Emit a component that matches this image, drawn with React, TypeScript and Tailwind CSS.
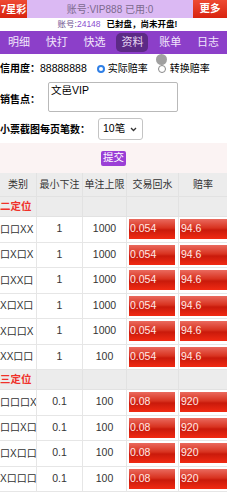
import React from "react";

const font = { fontFamily: '"Liberation Sans", "Noto Sans CJK SC", sans-serif' };

const navItems = ["明细", "快打", "快选", "资料", "账单", "日志"];

type Row = { name: string; min: string; max: string; water: string; rate: string };

const erding: Row[] = [
  { name: "口口XX", min: "1", max: "1000", water: "0.054", rate: "94.6" },
  { name: "口X口X", min: "1", max: "1000", water: "0.054", rate: "94.6" },
  { name: "口XX口", min: "1", max: "1000", water: "0.054", rate: "94.6" },
  { name: "X口X口", min: "1", max: "1000", water: "0.054", rate: "94.6" },
  { name: "X口口X", min: "1", max: "1000", water: "0.054", rate: "94.6" },
  { name: "XX口口", min: "1", max: "100", water: "0.054", rate: "94.6" },
];

const sanding: Row[] = [
  { name: "口口口X", min: "0.1", max: "100", water: "0.08", rate: "920" },
  { name: "口口X口", min: "0.1", max: "100", water: "0.08", rate: "920" },
  { name: "口X口口", min: "0.1", max: "100", water: "0.08", rate: "920" },
  { name: "X口口口", min: "0.1", max: "100", water: "0.08", rate: "920" },
];

const cols = "grid grid-cols-[37px_46px_44px_52px_48px]";
const redCell =
  "h-[20px] flex items-center pl-[1px] text-[10.5px] text-[#ffe9e6] bg-[linear-gradient(to_bottom,#ea6a5e_0%,#d8321f_45%,#c91a0b_55%,#f12a13_100%)]";

function DataRow({ r }: { r: Row }) {
  return (
    <div className={`${cols} h-[25.5px] border-b border-[#e6e6e6] text-[10.5px] text-[#333]`}>
      <div className="flex items-center border-r border-[#e6e6e6] overflow-hidden whitespace-nowrap text-[10px]">
        {r.name}
      </div>
      <div className="flex items-center justify-center border-r border-[#e6e6e6]">{r.min}</div>
      <div className="flex items-center justify-center border-r border-[#e6e6e6]">{r.max}</div>
      <div className="flex items-start pt-[2px] pl-[2px] pr-[3px] border-r border-[#e6e6e6]">
        <div className={`${redCell} w-full`}>{r.water}</div>
      </div>
      <div className="flex items-start pt-[2px] pl-[1px]">
        <div className={`${redCell} w-full`}>{r.rate}</div>
      </div>
    </div>
  );
}

function GroupRow({ title }: { title: string }) {
  return (
    <div className={`${cols} h-[20px] bg-[#ececec] border-b border-[#e2e2e2]`}>
      <div className="flex items-center text-[10.5px] font-bold text-[#f0312a] whitespace-nowrap border-r border-[#e2e2e2]">
        {title}
      </div>
      <div className="border-r border-[#e2e2e2]" />
      <div className="border-r border-[#e2e2e2]" />
      <div className="border-r border-[#e2e2e2]" />
      <div />
    </div>
  );
}

export default function App() {
  return (
    <div className="w-[227px] h-[494px] overflow-hidden bg-white relative" style={font}>
      {/* top bar */}
      <div className="flex h-[18px]">
        <div className="w-[27px] flex items-center justify-center bg-[linear-gradient(to_bottom,#ee4a32,#d8230f)] text-white text-[10px] font-bold whitespace-nowrap">
          7星彩
        </div>
        <div className="flex-1 flex items-center justify-center bg-[#dbb9f3] text-[#7b6a8e] text-[10px] whitespace-nowrap">
          账号:VIP888 已用:0
        </div>
        <div className="w-[34px] flex items-center justify-center bg-[linear-gradient(to_bottom,#ee4a32,#d8230f)] text-white text-[10.5px] font-bold">
          更多
        </div>
      </div>

      {/* notice */}
      <div className="h-[13px] flex items-center justify-center text-[8.5px] whitespace-nowrap pl-[8px]">
        <span className="text-[#6b4f8c]">账号:</span>
        <span className="text-[#8b4fd0]">24148</span>
        <span className="ml-[6px] text-black font-bold">已封盘，尚未开盘!</span>
      </div>

      {/* nav */}
      <div className="flex h-[23px] bg-[#8c3fc9]">
        {navItems.map((n) => (
          <div key={n} className="flex-1 flex items-center justify-center">
            <span
              className={
                n === "资料"
                  ? "px-[5px] py-[1px] rounded-[5px] bg-[#5c2a86] text-[#e6d6f2] text-[11px]"
                  : "text-[#f1e6fb] text-[11px]"
              }
            >
              {n}
            </span>
          </div>
        ))}
      </div>

      {/* form */}
      <div className="relative">
        <div className="absolute left-[156px] top-[0px] w-[11px] h-[11px] rounded-full bg-[#a0a0a0]" />

        <div className="flex items-center h-[27px] pt-[2px] text-[10.5px] text-black whitespace-nowrap">
          <span className="font-bold text-[10px]">信用度：</span>
          <span>88888888</span>
          <span className="ml-[10px] w-[8px] h-[8px] rounded-full border-[2.5px] border-[#2f7fe6] bg-white" />
          <span className="ml-[3px] text-[10px]">实际赔率</span>
          <span className="ml-[10px] w-[8px] h-[8px] rounded-full border border-[#888] bg-white" />
          <span className="ml-[4px] text-[10px]">转换赔率</span>
        </div>

        <div className="flex items-start h-[34px] pt-[1px]">
          <span className="font-bold text-[10px] mt-[10px] w-[48px] whitespace-nowrap">销售点：</span>
          <div className="w-[130px] h-[30px] border border-[#b9b9b9] rounded-[2px] px-[2px] pt-[1px] text-[10.5px] leading-[13px] text-black">
            文邑VIP
          </div>
        </div>

        <div className="flex items-center h-[28px]">
          <span className="font-bold text-[10px] w-[98px] whitespace-nowrap">小票截图每页笔数：</span>
          <div className="w-[45px] h-[22px] border border-[#c4c4c4] rounded-[3px] flex items-center justify-between pl-[4px] pr-[5px] text-[10.5px]">
            <span>10笔</span>
            <svg width="7" height="5" viewBox="0 0 7 5">
              <path d="M1 1l2.5 2.5L6 1" fill="none" stroke="#333" strokeWidth="1.3" />
            </svg>
          </div>
        </div>
      </div>

      {/* submit */}
      <div className="h-[30px] bg-[#fbf3f3] flex items-center justify-center">
        <span className="px-[2px] h-[15px] flex items-center bg-[#9a3fd6] text-white text-[10.5px] rounded-[2px]">
          提交
        </span>
      </div>

      {/* table */}
      <div className={`${cols} h-[24px] bg-[#ececec] border-b border-[#e2e2e2] text-[10px] text-[#333] whitespace-nowrap`}>
        <div className="flex items-center justify-center border-r border-[#e2e2e2]">类别</div>
        <div className="flex items-center justify-center border-r border-[#e2e2e2]">最小下注</div>
        <div className="flex items-center justify-center border-r border-[#e2e2e2]">单注上限</div>
        <div className="flex items-center justify-center border-r border-[#e2e2e2]">交易回水</div>
        <div className="flex items-center justify-center">赔率</div>
      </div>
      <GroupRow title="二定位" />
      {erding.map((r, i) => (
        <DataRow key={"e" + i} r={r} />
      ))}
      <GroupRow title="三定位" />
      {sanding.map((r, i) => (
        <DataRow key={"s" + i} r={r} />
      ))}
    </div>
  );
}
